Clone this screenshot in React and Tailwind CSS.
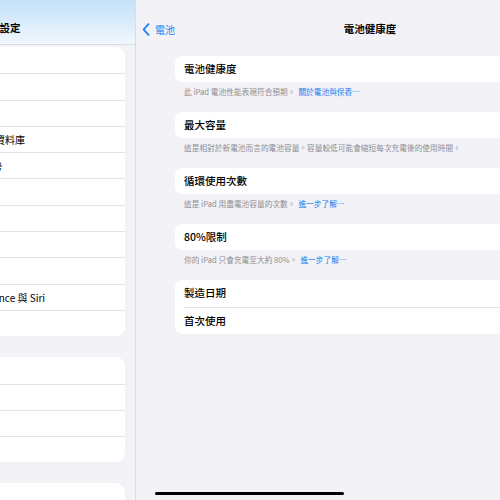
const FONT = { fontFamily: '"Noto Sans CJK TC", "Noto Sans", sans-serif' };

const sideMain = [
  "輔助使用",
  "相機",
  "控制中心",
  "主畫面與 App 資料庫",
  "多工處理與手勢",
  "搜尋",
  "相機",
  "顯示器與亮度",
  "桌面背景",
  "Apple Intelligence 與 Siri",
  "電池",
];
const sideSecond = ["通知", "聲音", "專注模式", "螢幕使用時間"];

function SideCard({ rows, className = "" }) {
  return (
    <div className={`mx-[10px] shrink-0 rounded-[9px] bg-white ${className}`}>
      {rows.map((r, i) => (
        <div
          key={i}
          className={`flex h-[26.3px] items-center pl-[37px] text-[10px] text-black ${i ? "border-t border-[#e3e3e7]" : ""}`}
        >
          <span className="whitespace-nowrap">{r}</span>
        </div>
      ))}
    </div>
  );
}

function Section({ title, note, link }) {
  return (
    <div className="h-[56px]">
      <div className="flex h-[26px] items-center rounded-[7px] bg-white px-[9px] text-[10.5px] font-medium text-black">
        {title}
      </div>
      <p className="mt-[5px] h-[10px] whitespace-nowrap px-[9px] text-[7.7px] leading-[10px] text-[#8e8e93]">
        {note}
        {link && <span className="ml-[3px] text-[#1a7cf5]">{link}</span>}
      </p>
    </div>
  );
}

export default function App() {
  return (
    <div style={FONT} className="relative flex h-[500px] w-[500px] overflow-hidden bg-[#f2f2f7]">
      {/* sidebar, its left part runs off the screen */}
      <aside className="ml-[-115px] flex w-[251px] shrink-0 flex-col border-r border-[#dcdce0] bg-[#f2f2f7]">
        <div className="flex h-[45px] shrink-0 items-end justify-center border-b border-[#d9dde2] bg-gradient-to-b from-[#c4e1f9] via-[#d9ecfb] to-[#f0f7fd] pb-[8px]">
          <span className="text-[10.5px] font-semibold text-black">設定</span>
        </div>
        <SideCard rows={sideMain} className="mt-[2px]" />
        <SideCard rows={sideSecond} className="mt-[21px]" />
        <SideCard rows={["面容 ID 與密碼"]} className="mt-[21px]" />
      </aside>

      {/* detail pane */}
      <main className="w-[468px] shrink-0">
        <div className="relative flex h-[45px] items-end justify-center pb-[8px]">
          <div className="absolute bottom-[8px] left-[6px] flex items-center gap-[5px] text-[#1a7cf5]">
            <svg width="8" height="13" viewBox="0 0 8 13" fill="none">
              <path d="M6.5 1.2 1.6 6.5l4.9 5.3" stroke="currentColor" strokeWidth="1.8" strokeLinecap="round" strokeLinejoin="round" />
            </svg>
            <span className="text-[10px]">電池</span>
          </div>
          <span className="text-[10.5px] font-semibold text-black">電池健康度</span>
        </div>

        <div className="mt-[11px] px-[39px]">
          <Section title="電池健康度" note="此 iPad 電池性能表現符合預期。" link="關於電池與保養⋯" />
          <Section title="最大容量" note="這是相對於新電池而言的電池容量。容量較低可能會縮短每次充電後的使用時間。" />
          <Section title="循環使用次數" note="這是 iPad 用盡電池容量的次數。" link="進一步了解⋯" />
          <Section title="80%限制" note="你的 iPad 只會充電至大約 80%。" link="進一步了解⋯" />
          <div className="rounded-[7px] bg-white">
            <div className="flex h-[26.5px] items-center px-[9px] text-[10.5px] font-medium text-black">製造日期</div>
            <div className="ml-[9px] border-t border-[#e3e3e7]" />
            <div className="flex h-[26.5px] items-center px-[9px] text-[10.5px] font-medium text-black">首次使用</div>
          </div>
        </div>
      </main>

      <div className="absolute bottom-[5px] left-[155px] h-[3px] w-[189px] rounded-full bg-black" />
    </div>
  );
}
